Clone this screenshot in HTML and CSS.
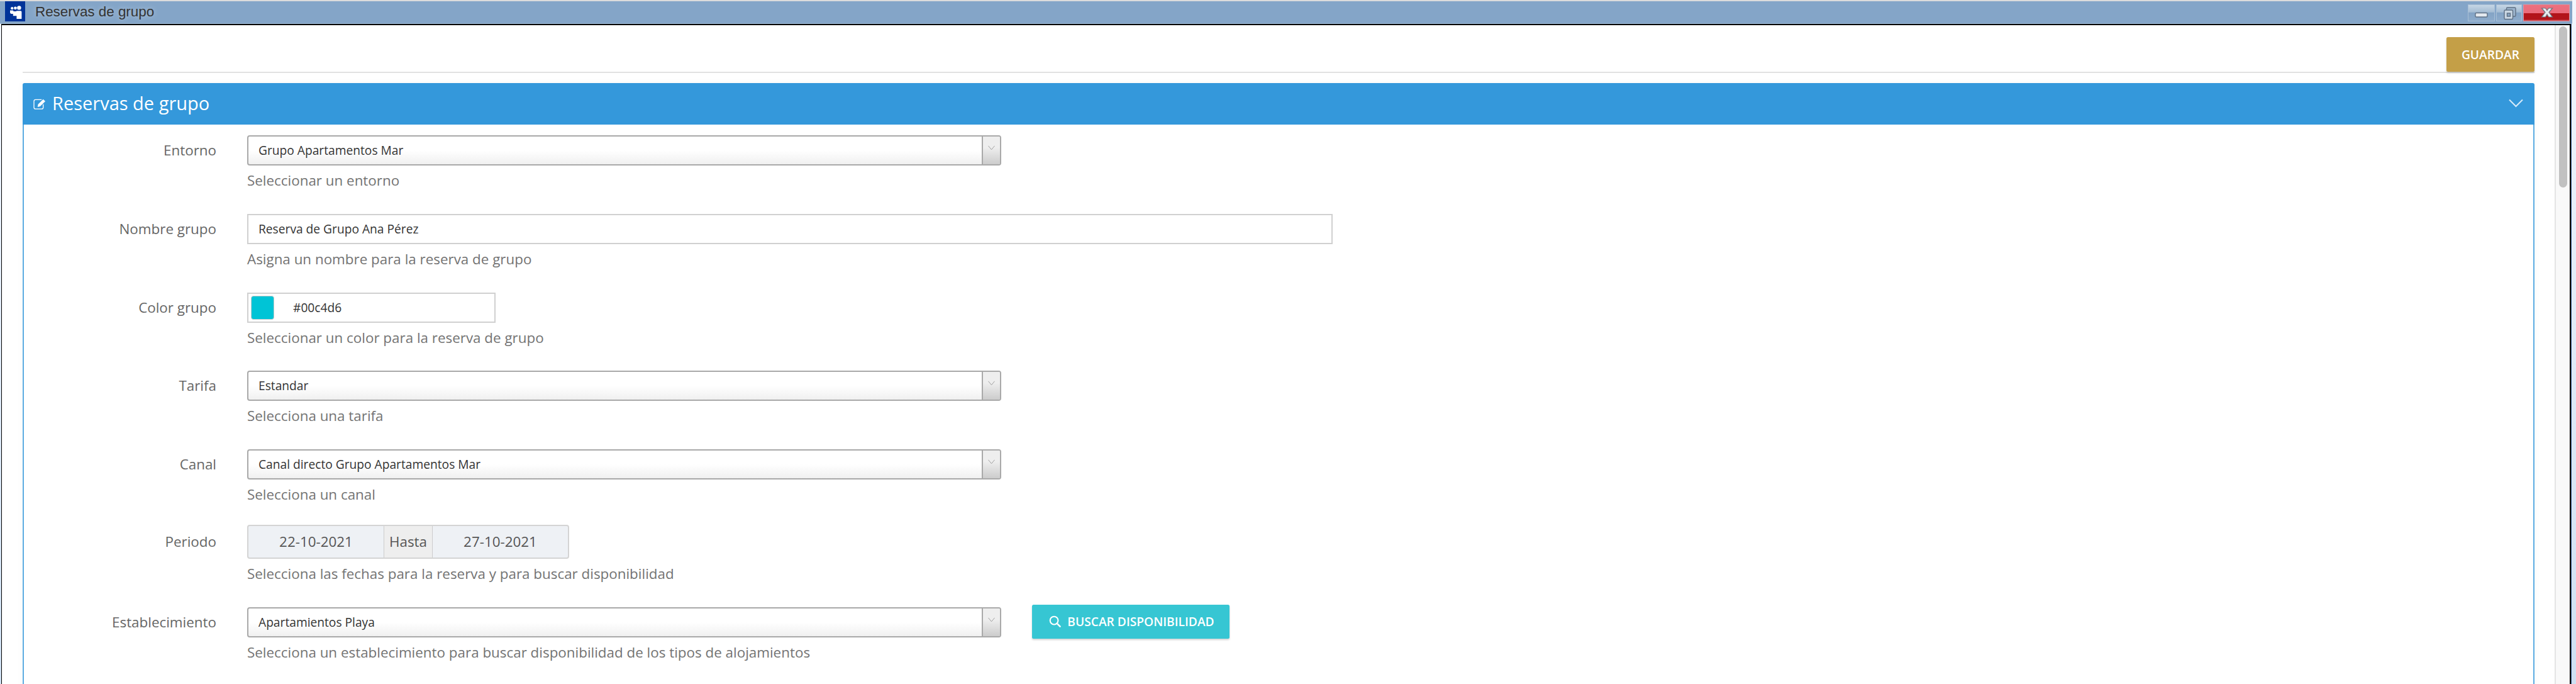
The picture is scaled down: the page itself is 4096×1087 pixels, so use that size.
FILE: index.html
```html
<!DOCTYPE html>
<html lang="es">
<head>
<meta charset="utf-8">
<title>Reservas de grupo</title>
<link rel="stylesheet" href="styles.css">
</head>
<body>
<div class="titlebar">
  <div class="app-icon">
    <svg viewBox="0 0 40 40" width="32" height="32"><g fill="#fff"><circle cx="14" cy="14" r="2.6"/><circle cx="20.5" cy="13.5" r="3"/><circle cx="28" cy="13" r="4"/><path d="M10 18h6l1 2h5l1-1h8c1 0 2 1 2 2v14H23v-6h-7v-4h-3c-2 0-3-1-3-3z"/></g></svg>
  </div>
  <div class="app-title">Reservas de grupo</div>
  <div class="controls">
    <div class="ctl-btn ctl-min"><svg viewBox="0 0 43 27" width="43" height="27"><rect x="12" y="13.5" width="19" height="6.5" rx="1.5" fill="#e4eaf0" stroke="#5f7084" stroke-width="1.4"/></svg></div>
    <div class="ctl-btn ctl-max"><svg viewBox="0 0 41 27" width="41" height="27"><rect x="16.5" y="5" width="14.5" height="14" rx="1.5" fill="#9cb4cc" stroke="#5f7084" stroke-width="1.4"/><rect x="13" y="9" width="13.5" height="14.5" rx="1.5" fill="#cbd8e4" stroke="#5f7084" stroke-width="1.4"/><rect x="17.5" y="14" width="5" height="5" fill="#8aa6c2" stroke="#5f7084" stroke-width="1.4"/></svg></div>
    <div class="ctl-btn ctl-close"><svg viewBox="0 0 74 27" width="74" height="27"><path d="M29.5 6h6l2.5 3.5L40.5 6h6l-5.5 6.5 5.5 7.5h-6L38 16l-2.5 4h-6l5.5-7.5z" fill="#e8ebee" stroke="#6a7480" stroke-width="1.2"/></svg></div>
  </div>
</div>
<div class="frame">
  <div class="content">
    <div class="topbar"><button class="btn btn-save">GUARDAR</button></div>
    <section class="panel">
      <header class="panel-head">
        <svg class="edit-icon" viewBox="0 0 26 22" width="22" height="18"><path d="M17 3H5C3 3 2 4 2 6v12c0 2 1 3 3 3h12c2 0 3-1 3-3v-6" fill="none" stroke="#fff" stroke-width="1.6"/><path d="M9 17l1-5L20 2l4 4-10 10z" fill="#fff"/></svg>
        <h1 class="panel-title">Reservas de grupo</h1>
        <svg class="panel-chevron" viewBox="0 0 23 14" width="23" height="14"><path d="M1 1.5l10.5 10.5L22 1.5" fill="none" stroke="#d8ecfa" stroke-width="2"/></svg>
      </header>
      <div class="panel-body">
        <div class="row">
          <label class="row-label">Entorno</label>
          <div class="field">
            <div class="select"><span class="select-text">Grupo Apartamentos Mar</span><span class="select-arrow"><svg viewBox="0 0 12 8" width="11" height="8"><path d="M.5.5L6 7 11.5.5" fill="none" stroke="#999"/></svg></span></div>
            <p class="help">Seleccionar un entorno</p>
          </div>
        </div>
        <div class="row">
          <label class="row-label">Nombre grupo</label>
          <div class="field">
            <div class="input input-wide">Reserva de Grupo Ana Pérez</div>
            <p class="help">Asigna un nombre para la reserva de grupo</p>
          </div>
        </div>
        <div class="row">
          <label class="row-label">Color grupo</label>
          <div class="field">
            <div class="input input-color"><span class="swatch"></span>#00c4d6</div>
            <p class="help">Seleccionar un color para la reserva de grupo</p>
          </div>
        </div>
        <div class="row">
          <label class="row-label">Tarifa</label>
          <div class="field">
            <div class="select"><span class="select-text">Estandar</span><span class="select-arrow"><svg viewBox="0 0 12 8" width="11" height="8"><path d="M.5.5L6 7 11.5.5" fill="none" stroke="#999"/></svg></span></div>
            <p class="help">Selecciona una tarifa</p>
          </div>
        </div>
        <div class="row">
          <label class="row-label">Canal</label>
          <div class="field">
            <div class="select"><span class="select-text">Canal directo Grupo Apartamentos Mar</span><span class="select-arrow"><svg viewBox="0 0 12 8" width="11" height="8"><path d="M.5.5L6 7 11.5.5" fill="none" stroke="#999"/></svg></span></div>
            <p class="help">Selecciona un canal</p>
          </div>
        </div>
        <div class="row row-period">
          <label class="row-label row-label-period">Periodo</label>
          <div class="field">
            <div class="period"><span class="date">22-10-2021</span><span class="addon">Hasta</span><span class="date">27-10-2021</span></div>
            <p class="help">Selecciona las fechas para la reserva y para buscar disponibilidad</p>
          </div>
        </div>
        <div class="row">
          <label class="row-label">Establecimiento</label>
          <div class="field">
            <div class="select"><span class="select-text">Apartamientos Playa</span><span class="select-arrow"><svg viewBox="0 0 12 8" width="11" height="8"><path d="M.5.5L6 7 11.5.5" fill="none" stroke="#999"/></svg></span></div>
            <p class="help">Selecciona un establecimiento para buscar disponibilidad de los tipos de alojamientos</p>
          </div>
          <button class="btn btn-search"><svg viewBox="0 0 20 20" width="19" height="19"><circle cx="8.5" cy="8.5" r="6.7" fill="none" stroke="#fff" stroke-width="2.2"/><path d="M13.5 13.5l5 5" stroke="#fff" stroke-width="2.6" stroke-linecap="round"/></svg>BUSCAR DISPONIBILIDAD</button>
        </div>
      </div>
    </section>
  </div>
  <div class="scrolltrack"><div class="scrollthumb"></div></div>
</div>
</body>
</html>
```
FILE: styles.css
```css
* { box-sizing: border-box; }
html, body { height: 100%; }
body {
  margin: 0;
  height: 1087px;
  overflow: hidden;
  display: flex;
  flex-direction: column;
  background: linear-gradient(#f2f6fd, #cfe0f2);
  font-family: "Open Sans", sans-serif;
}
.titlebar {
  flex: none;
  width: 4090px;
  height: 38px;
  border-top: 2px solid #dcdcdc;
  border-bottom: 1px solid #a5c0dc;
  background: #84a5c8;
  display: flex;
}
.app-icon {
  width: 32px;
  height: 32px;
  margin-left: 8px;
  background: #003399;
}
.app-icon svg { display: block; }
.app-title {
  margin-left: 16px;
  font: 22.4px/33px "Liberation Sans", Arial, sans-serif;
  color: #333;
  text-shadow: 0 0 8px rgba(255, 255, 255, .45);
}
.controls {
  margin-left: auto;
  margin-right: 4px;
  margin-top: 5px;
  display: flex;
  gap: 2px;
  height: 27px;
}
.ctl-btn { height: 27px; border: 1px solid #a8bfd6; }
.ctl-btn svg { display: block; margin: -1px; }
.ctl-min { width: 43px; background: linear-gradient(#c6d6e5, #a4bcd3 45%, #83a3c5 50%, #8dabcb); }
.ctl-max { width: 41px; background: linear-gradient(#c6d6e5, #a4bcd3 45%, #83a3c5 50%, #8dabcb); }
.ctl-close { width: 74px; background: linear-gradient(#ec6f7e 0, #ea6c7c 50%, #b2141a 52%, #b2141a 90%, #cf5a62); border-color: #e58c97; }

.frame {
  flex: none;
  margin-left: 2px;
  width: 4086px;
  height: 1049px;
  display: flex;
  background: #fff;
  border-top: 2px solid #000;
  border-left: 1px solid #000;
  border-right: 2px solid #000;
  box-shadow: 1px 0 0 #3d5f92;
}
.content {
  flex: 1;
  min-width: 0;
  padding: 0 32px 0 33px;
  overflow: hidden;
}
.scrolltrack {
  flex: none;
  width: 24px;
  padding: 2px 0 0 5px;
  background: #f9f9f9;
  border-left: 2px solid #e4e4e4;
}
.scrollthumb {
  width: 13px;
  height: 256px;
  border-radius: 7px;
  background: #c1c1c1;
}
.topbar {
  height: 76px;
  padding-top: 19px;
  border-bottom: 2px solid #e2e2e2;
  display: flex;
  justify-content: flex-end;
  align-items: flex-start;
}
.btn {
  border: 0;
  border-radius: 2.5px;
  color: #fff;
  font-family: "Open Sans", sans-serif;
  font-weight: 600;
  box-shadow: 0 2px 3px rgba(0, 0, 0, .18);
}
.btn-save {
  width: 140px;
  height: 55px;
  background: #c49f47;
  font-size: 19.2px;
}
.panel {
  margin-top: 16px;
  height: 1000px;
  box-shadow: 0 0 10px rgba(0, 0, 0, .04);
}
.panel-head {
  height: 66px;
  padding: 0 18px 0 16px;
  display: flex;
  align-items: center;
  background: #3498db;
  border-radius: 3px 3px 0 0;
  color: #fff;
}
.edit-icon { flex: none; margin-top: 0; }
.panel-title {
  margin: 0 0 3px 9px;
  font-size: 29px;
  font-weight: 400;
  line-height: 60px;
}
.panel-chevron { margin-left: auto; margin-bottom: 2px; }
.panel-body {
  height: 934px;
  padding-top: 17px;
  border-left: 2px solid #5dade2;
  border-right: 2px solid #5dade2;
}
.row {
  display: flex;
  align-items: flex-start;
  padding-bottom: 40.8px;
}
.row-period { margin-top: -5px; }
.row-label {
  flex: none;
  width: 306px;
  margin-right: 49px;
  text-align: right;
  font-size: 22.4px;
  line-height: 48px;
  color: #666;
}
.row-label-period { line-height: 54px; }
.help {
  margin: 12px 0 0;
  font-size: 22.4px;
  line-height: 24px;
  color: #737373;
}
.select {
  width: 1199px;
  height: 48px;
  display: flex;
  border: 2px solid #a9a9a9;
  border-radius: 4px;
  background: linear-gradient(#fff 50%, #f0f0f0);
}
.select-text {
  flex: 1;
  padding-left: 16px;
  font-size: 19.2px;
  line-height: 44px;
  color: #333;
}
.select-arrow {
  flex: none;
  width: 29px;
  display: flex;
  justify-content: center;
  padding-top: 14px;
  border-left: 2px solid #a9a9a9;
  border-radius: 0 2px 2px 0;
  background: linear-gradient(#eee 40%, #ccc);
}
.select-arrow svg { display: block; }
.input {
  height: 48px;
  display: flex;
  align-items: center;
  border: 2px solid #d0d0d0;
  background: #fff;
  font-size: 19.2px;
  color: #333;
}
.input-wide { width: 1726px; padding-left: 16px; }
.input-color { width: 395px; padding-left: 4px; }
.swatch {
  width: 37px;
  height: 38px;
  margin-right: 30px;
  border-radius: 4px;
  border: 1px solid #ccc;
  background: #00c4d6;
}
.period {
  width: 512px;
  height: 54px;
  display: flex;
  border: 2px solid #d4d4d4;
  border-radius: 4px;
  background: #eef1f5;
  color: #555;
  font-size: 22.4px;
  line-height: 50px;
}
.date { flex: 1; text-align: center; }
.addon {
  flex: none;
  width: 78px;
  text-align: center;
  background: #eee;
  border-left: 1px solid #ccc;
  border-right: 1px solid #ccc;
}
.btn-search {
  width: 314px;
  height: 54px;
  margin: -4px 0 0 49px;
  padding: 0 0 0 3px;
  display: flex;
  align-items: center;
  justify-content: center;
  gap: 10px;
  background: #36c6d3;
  font-size: 19.2px;
}
```
